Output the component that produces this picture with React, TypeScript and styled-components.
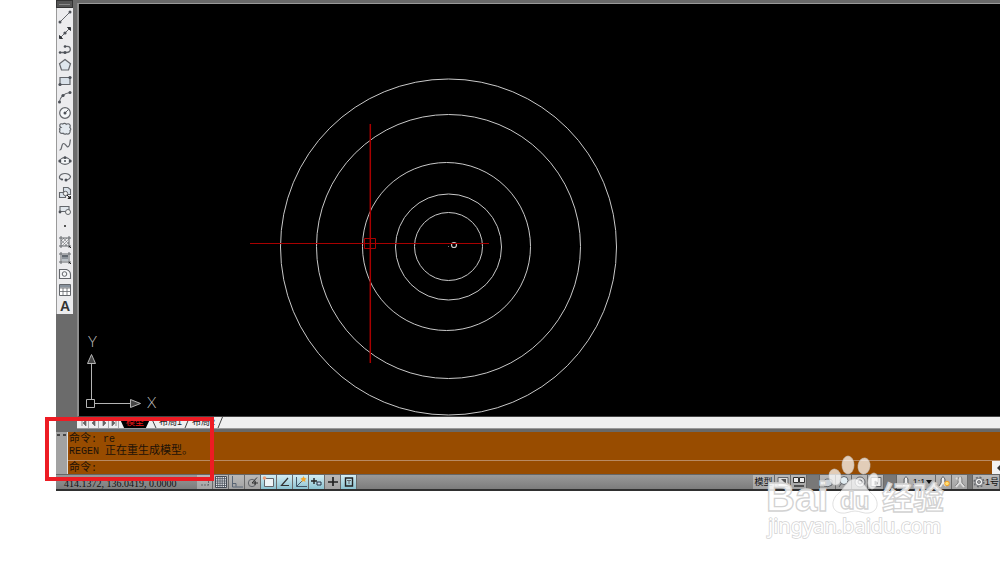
import React from "react";
import styled, { createGlobalStyle } from "styled-components";

const GlobalStyle = createGlobalStyle`
  *, *::before, *::after { box-sizing: border-box; }
  body {
    margin: 0;
    background: #fff;
    font-family: "Liberation Sans", "Noto Sans CJK SC", sans-serif;
    color: #111;
  }
  button, input {
    font: inherit;
    color: inherit;
    margin: 0;
    padding: 0;
    border: 0;
    border-radius: 0;
    background: none;
  }
  svg { display: block; }
`;

const Page = styled.div`
  position: relative;
  padding-left: 56px;
  min-height: 100vh;
  overflow: hidden;
`;

const Workspace = styled.div`
  display: flex;
`;

const ToolDock = styled.aside`
  flex: 0 0 21px;
  background: #6b6b6b;
`;

const Toolbar = styled.div`
  display: flex;
  flex-direction: column;
  gap: 1px;
  width: 17px;
  background: #ececee;
  border-left: 1px solid #9a9a9a;
`;

const Grip = styled.div`
  height: 8px;
  padding: 3px 2px 0;
  margin-left: -1px;
  background: #555;
  border: 1px solid #333;
  &::after {
    content: "";
    display: block;
    height: 1px;
    background: #888;
  }
`;

const ToolGroup = styled.div`
  display: flex;
  flex-direction: column;
`;

const ToolButton = styled.button`
  display: flex;
  align-items: center;
  justify-content: center;
  width: 15px;
  height: 16px;
`;

const Model = styled.main`
  flex: 1;
  min-width: 0;
  background: #696969;
  padding: 3px 0 3px;
`;

const Drawing = styled.div`
  height: 414px;
  background: #000;
  border-top: 1px solid #9a9a9a;
  border-left: 2px solid #8d8d8d;
  border-bottom: 1px solid #444;
  overflow: hidden;
`;

const TabStrip = styled.nav`
  display: flex;
  align-items: center;
  height: 12px;
  padding-left: 2px;
  background: #efefef;
  border-bottom: 1px solid #999;
  overflow: hidden;
`;

const PageButton = styled.button`
  display: flex;
  align-items: center;
  justify-content: center;
  width: 10px;
  height: 11px;
  border-right: 1px solid #aaa;
`;

const Tab = styled.button<{ $active?: boolean }>`
  height: 11px;
  width: ${(p) => (p.$active ? 32 : 27)}px;
  font-size: 9px;
  line-height: 11px;
  white-space: nowrap;
  color: ${(p) => (p.$active ? "#f01818" : "#222")};
  background: ${(p) => (p.$active ? "#000" : "none")};
  clip-path: ${(p) => (p.$active ? "polygon(0 0, 100% 0, 84% 100%, 16% 100%)" : "none")};
`;

const CommandPanel = styled.section`
  display: flex;
  background: #984c00;
`;

const CommandGrip = styled.div`
  flex: 0 0 12px;
  padding: 2px 1px 0;
  background: #a2a2a2;
  border-right: 1px solid #ddd;
  &::before {
    content: "";
    display: block;
    height: 2px;
    border-top: 1px dashed #444;
    border-bottom: 1px dashed #444;
  }
`;

const CommandBody = styled.div`
  flex: 1;
  min-width: 0;
  font-size: 11px;
  line-height: 12px;
  color: #1c1208;
`;

const History = styled.div`
  height: 29px;
  border-bottom: 1px solid #b98a62;
`;

const HistoryLine = styled.div`
  height: 12px;
  padding-left: 1px;
  white-space: pre;
`;

const Latin = styled.span`
  font-family: "Liberation Mono", monospace;
  font-size: 10px;
`;

const Prompt = styled.div`
  display: flex;
  align-items: center;
  height: 13px;
  padding-left: 1px;
`;

const PromptInput = styled.input`
  flex: 1;
  min-width: 0;
  height: 12px;
  margin-left: 4px;
  outline: none;
`;

const ScrollButton = styled.button`
  display: flex;
  align-items: center;
  justify-content: flex-end;
  width: 8px;
  height: 13px;
  background: #f2f2f2;
`;

const StatusBar = styled.footer`
  display: flex;
  height: 17px;
  background: linear-gradient(#999, #7c7c7c);
  border-top: 1px solid #666;
  border-bottom: 2px solid #2f2f2f;
  overflow: hidden;
`;

const Coordinates = styled.output`
  width: 141px;
  padding-left: 8px;
  font-family: "Liberation Serif", serif;
  font-size: 10px;
  line-height: 17px;
  white-space: nowrap;
  color: #111;
`;

const StatusSpacer = styled.div`
  flex: 1;
`;

const StatusGap = styled.div<{ $width: number }>`
  flex: 0 0 ${(p) => p.$width}px;
  background: #787878;
  border-right: 1px solid #666;
`;

const StatusButton = styled.button<{ $on?: boolean; $width?: number }>`
  display: flex;
  align-items: center;
  justify-content: center;
  flex: 0 0 ${(p) => p.$width ?? 16}px;
  height: 14px;
  font-size: 9px;
  line-height: 14px;
  white-space: nowrap;
  overflow: hidden;
  background: ${(p) => (p.$on ? "linear-gradient(#d3edf3, #8cc3d1)" : "linear-gradient(#b9b9b9, #a3a3a3)")};
  border-right: 1px solid #6a6a6a;
`;

const Highlight = styled.div`
  position: absolute;
  left: 45px;
  top: 417px;
  width: 169px;
  height: 64px;
  border: 4px solid #ed1c24;
  pointer-events: none;
`;

const Watermark = styled.div`
  position: absolute;
  right: 50px;
  top: 450px;
  pointer-events: none;
`;

const Icon = ({ children }: { children: React.ReactNode }) => (
  <svg width="14" height="14" viewBox="0 0 14 14" fill="none" stroke="#63666b" strokeWidth="1" aria-hidden="true">
    {children}
  </svg>
);

const dot = (x: number, y: number, r = 1.2) => <circle key={`${x}-${y}`} cx={x} cy={y} r={r} fill="#4c5057" stroke="none" />;

const drawTools: [string, React.ReactNode][] = [
  ["Line", <><path d="M2 12 12 2" />{dot(2, 12, 1.5)}{dot(12, 2, 1.5)}</>],
  ["Construction line", <><path d="M2 12 12 2" />{dot(7, 7, 1.6)}<path d="M9.500 1.500h3v3zM1.500 9.500v3h3z" fill="#33363b" stroke="#33363b" /></>],
  ["Polyline", <><path d="M2 10.500h6M7 4.500q5-1 5.300 2.500T8 10.500" strokeWidth="1.300" />{dot(2, 10.5)}{dot(7, 10.5, 1.5)}{dot(7, 4.5, 1.3)}</>],
  ["Polygon", <path d="M7 1.500 12.500 5.700 10.500 12h-7L1.500 5.700z" fill="#dfe7ee" strokeWidth="1.200" />],
  ["Rectangle", <><path d="M2 3.500h10v7H2z" fill="#d9e1e9" strokeWidth="1.200" />{dot(2, 10.5, 1.6)}{dot(12, 3.5, 1.6)}</>],
  ["Arc", <><path d="M1.500 12Q2.500 4 12 2.500" strokeWidth="1.200" />{dot(1.5, 12, 1.5)}{dot(5, 5.5, 1.6)}{dot(12, 2.5, 1.5)}</>],
  ["Circle", <><circle cx="7" cy="7" r="5.300" fill="#f6f8fa" strokeWidth="1.200" /><path d="m7 7 3-3" />{dot(7, 7, 1.5)}</>],
  ["Revision cloud", <path d="M3 5.500C.500 4 2 1 4.500 2 6 .800 8 1.300 8.300 2.300 11 .800 13.300 3 11.800 5.500c1.300 1 1.200 2.500.200 3 .800 2.500-1.500 4.300-3.500 3.200-1.500.800-2.800.300-3.500-.500-2.500.800-4.300-1.200-3-3.200C1 7.200 1.500 6 3 5.500z" fill="#e4eaf0" strokeWidth="1.200" />],
  ["Spline", <path d="M1.500 12C4.500 12.500 3 5.500 5.500 5.500S8.500 10 10.500 8.500 11.500 4.500 12.500 1.500" strokeWidth="1.200" />],
  ["Ellipse", <><ellipse cx="7" cy="7" rx="5" ry="3.300" fill="#f3f5f7" strokeWidth="1.200" />{dot(1.8, 7, 1.5)}{dot(12.2, 7, 1.5)}{dot(7, 3.7, 1.4)}{dot(7, 7, 1)}</>],
  ["Ellipse arc", <><path d="M4 9.500Q1 9 1.500 6.500 3 3.500 7 3.500t5.500 3Q12 9.500 8 10" strokeWidth="1.200" />{dot(8, 10, 1.5)}{dot(4, 9.5, 1.1)}</>],
  ["Insert block", <><path d="M5.500 1.500h4.500l2.500 2v5h-7zM1.500 6.500h6v5h-6z" fill="#d9e1e9" strokeWidth="1.100" /><circle cx="7.500" cy="7.500" r="2.200" fill="#eee" /><path d="m9 9 3 3M10 12.500h2.500V10z" stroke="#222" fill="#222" /></>],
];

const areaTools: [string, React.ReactNode][] = [
  ["Make block", <><path d="M2 3.500h9v5H2z" fill="#e0e6ec" strokeWidth="1.100" />{dot(2, 9, 1.4)}<circle cx="10" cy="9" r="2.500" fill="#f2f2f2" /></>],
  ["Point", <rect x="6" y="6" width="2" height="2" fill="#555" stroke="none" />],
  ["Hatch", <><path d="M1 3h12M1 11h12M3 1v12M11 1v12" /><path d="m3 6 3-3M3 9l6-6M4 11l7-7M7 11l4-4M3 5l6 6M5 3l6 6" strokeWidth=".5" /><path d="m11 11 2 2" stroke="#222" /></>],
  ["Gradient", <><path d="M1 3h12M1 11h12M3 1v12M11 1v12" /><path d="M4 4h6v2H4z" fill="#626970" stroke="none" /><path d="M4 6h6v2H4z" fill="#8d949b" stroke="none" /><path d="M4 8h6v2H4z" fill="#bac0c5" stroke="none" /><path d="m11 11 2 2" stroke="#222" /></>],
  ["Region", <><path d="M1.500 2.500h7q4 1.500 4 5v4h-11z" fill="#f4f6f8" strokeWidth="1.100" /><circle cx="6.500" cy="7" r="2.300" /></>],
  ["Table", <><path d="M1.500 1.500h11v11h-11z" fill="#fff" /><path d="M2 2h10v2.500H2z" fill="#87919c" stroke="none" /><path d="M1.500 5h11M1.500 8.500h11M5 5v7.500M9 5v7.500" strokeWidth=".8" /></>],
  ["Multiline text", <text x="7" y="12" textAnchor="middle" fontFamily="Liberation Sans, sans-serif" fontSize="14" fontWeight="700" fill="#333" stroke="none">A</text>],
];

const pagers: [string, string][] = [
  ["First tab", "M2 1v6M6 1 3 4l3 3z"],
  ["Previous tab", "M5 1 2 4l3 3z"],
  ["Next tab", "M3 1l3 3-3 3z"],
  ["Last tab", "M2 1l3 3-3 3zM6 1v6"],
];

const modes: [string, boolean, React.ReactNode][] = [
  ["Snap", false, <path d="M3 10h8M10.500 3v7" strokeDasharray="2 1" />],
  ["Grid", false, <><path d="M1.500 1.500h11v11h-11z" fill="#e6e8ec" stroke="#444b55" /><path d="M3.700 1v11M6 1v11M8.200 1v11M10.500 1v11M1 3.700h11M1 6h11M1 8.200h11M1 10.500h11" stroke="#444b55" strokeWidth=".8" /></>],
  ["Ortho", false, <path d="M2.500 1v11H13M2.500 8.500h3.500v3" stroke="#596574" />],
  ["Polar", false, <><circle cx="6" cy="8" r="3.700" /><path d="M6 8h6M6 8l5-5.500M9 6v4" stroke="#333" /></>],
  ["Object snap", true, <><path d="M2.500 3.500h9v8h-9z" fill="#eef4f6" /><circle cx="2.500" cy="3" r="1.800" fill="#ee9f7b" stroke="none" /></>],
  ["Object tracking", true, <path d="M10 3 3.500 10.500H11" stroke="#333" strokeWidth="1.200" />],
  ["Dynamic UCS", true, <><path d="M2.500 2v9.500H13M2.500 11.500 8 6" stroke="#44596b" /><path d="m9.500 1 1 2 2 .5-1.500 1.500.5 2-2-1-2 1 .5-2L6.500 3.500l2-.5z" fill="#f2a62c" stroke="none" /></>],
  ["Dynamic input", true, <><path d="M1 6h6M4 3v6" stroke="#222" strokeWidth="1.400" /><path d="M7 7h4v3H7z" fill="#cde" stroke="#234" /></>],
  ["Line weight", false, <path d="M2 7h10M7 2v9" stroke="#222" strokeWidth="1.700" />],
  ["Quick properties", true, <><path d="M3.500 3h7v8h-7z" stroke="#222" strokeWidth="1.400" /><path d="M5 5.500h4M7 5v4" /></>],
];

const ConcentricCircles = () => (
  <svg width="100%" height="412" fill="none" role="img" aria-label="Drawing">
    <g stroke="#c9c9c9">
      <circle cx="369.500" cy="243" r="168" />
      <circle cx="369.500" cy="242.500" r="132" />
      <circle cx="367.500" cy="242.500" r="84" />
      <circle cx="369.500" cy="243" r="53" />
      <circle cx="369.500" cy="242.500" r="34" />
      <circle cx="375" cy="241" r="2.500" strokeWidth="1.200" />
    </g>
    <rect x="369" y="242" width="1" height="1" fill="#777" />
    <g stroke="#a80000">
      <path d="M171 239.500h239" />
      <path d="M291.300 120v239" strokeWidth="1.500" />
      <path d="M285.500 234.500h11v10h-11z" />
    </g>
    <g stroke="#b4b4b4">
      <path d="M7.500 395.500h8v8h-8zM12.500 395.500V359.500M15.500 399.500H51.500" />
      <path d="M12.500 350.500l4 9h-8zM61.500 399.500l-10 4v-8z" fill="#444" />
    </g>
    <g fill="#c4c4c4" fontFamily="Lato, sans-serif" fontWeight="300" fontSize="15">
      <text x="9" y="343">Y</text>
      <text x="68" y="404">X</text>
    </g>
  </svg>
);

const TabSlash = ({ d }: { d: string }) => (
  <svg width="6" height="11" viewBox="0 0 6 11" stroke="#444" fill="none" aria-hidden="true"><path d={d} /></svg>
);

export default function App() {
  return (
    <Page>
      <GlobalStyle />
      <Workspace>
        <ToolDock>
          <Toolbar role="toolbar" aria-label="Draw">
            <Grip />
            {[drawTools, areaTools].map((group, i) => (
              <ToolGroup key={i}>
                {group.map(([name, art]) => (
                  <ToolButton key={name} type="button" aria-label={name}><Icon>{art}</Icon></ToolButton>
                ))}
              </ToolGroup>
            ))}
          </Toolbar>
        </ToolDock>
        <Model>
          <Drawing><ConcentricCircles /></Drawing>
          <TabStrip>
            {pagers.map(([name, d]) => (
              <PageButton key={name} type="button" aria-label={name}>
                <svg width="8" height="8" viewBox="0 0 8 8" fill="#666" stroke="#666" strokeWidth=".7"><path d={d} /></svg>
              </PageButton>
            ))}
            <Tab type="button" $active>模型</Tab>
            <TabSlash d="M0 0l5 11" />
            <Tab type="button">布局1</Tab>
            <TabSlash d="M5.500 0 1 11" />
            <Tab type="button">布局2</Tab>
            <TabSlash d="M5.500 0 1 11" />
          </TabStrip>
        </Model>
      </Workspace>

      <CommandPanel>
        <CommandGrip />
        <CommandBody>
          <History>
            <HistoryLine>命令<Latin>: re</Latin></HistoryLine>
            <HistoryLine><Latin>REGEN </Latin>正在重生成模型。</HistoryLine>
          </History>
          <Prompt>
            <label htmlFor="command">命令<Latin>:</Latin></label>
            <PromptInput id="command" type="text" />
            <ScrollButton type="button" aria-label="Scroll left">
              <svg width="4" height="6" viewBox="0 0 4 6" fill="#333"><path d="M4 0v6L1 3z" /></svg>
            </ScrollButton>
          </Prompt>
        </CommandBody>
      </CommandPanel>

      <StatusBar>
        <Coordinates>414.1372, 136.0419, 0.0000</Coordinates>
        {modes.map(([name, on, art]) => (
          <StatusButton key={name} type="button" $on={on} aria-label={name}><Icon>{art}</Icon></StatusButton>
        ))}
        <StatusSpacer />
        <StatusButton type="button" $width={22}>模型</StatusButton>
        <StatusButton type="button" aria-label="Layout"><Icon><path d="M2 2.500h10v9H2z" fill="#ddd" /><path d="m5 4 5 5V4z" fill="#555" stroke="none" /></Icon></StatusButton>
        <StatusButton type="button" aria-label="Quick view"><Icon><path d="M1.500 2.500h5v5h-5zM7.500 2.500h5v5h-5z" fill="#eee" stroke="#333" /><path d="M2 11h10" stroke="#333" strokeWidth="1.500" /></Icon></StatusButton>
        <StatusGap $width={13} />
        <StatusButton type="button" aria-label="Pan"><Icon><path d="M2 7q3-5 9-2v5q-4 3-8 1z" fill="#c8d0d8" /></Icon></StatusButton>
        <StatusButton type="button" aria-label="Zoom"><Icon><circle cx="7" cy="5.500" r="4" fill="#e2edf2" /><path d="m4 9-2 3" /></Icon></StatusButton>
        <StatusButton type="button" aria-label="Steering wheel"><Icon><circle cx="7" cy="7" r="5" fill="#ddd" /><circle cx="7" cy="7" r="2" /></Icon></StatusButton>
        <StatusButton type="button" aria-label="Show motion"><Icon><path d="M2 2.500h10v9H2z" fill="#eee" /><path d="m6 6 3 2-3 2z" fill="#555" /></Icon></StatusButton>
        <StatusGap $width={13} />
        <StatusButton type="button" $width={39}>
          <Icon><path d="M7 2v5l-3 4M7 7l3 4" stroke="#eee" strokeWidth="2" /><path d="M7 1.500 9 4v4l2 3M7 1.500 5 4v4l-2 3" /></Icon>
          1:1
          <svg width="8" height="6" viewBox="0 0 8 6"><path d="M1 1h6L4 5z" fill="#111" /></svg>
        </StatusButton>
        <StatusButton type="button" aria-label="Annotation visibility"><Icon><path d="M6 2v5l-3 5M6 7l3 4" stroke="#eee" strokeWidth="2" /><path d="M6 1.500 8 4v3M6 1.500 4 4v4l-2 3" /><circle cx="10" cy="8.500" r="2.300" fill="#ffe073" stroke="#f29b20" /></Icon></StatusButton>
        <StatusButton type="button" aria-label="Auto scale"><Icon><path d="M7 2v5l-4 5M7 7l4 5M3 3l4 3" stroke="#ddd" strokeWidth="2" /><path d="M8 1.500 9 4v4l3 3M6 2 5 4v4l-3 3" stroke="#888" /></Icon></StatusButton>
        <StatusGap $width={5} />
        <StatusButton type="button" $width={27}>
          <Icon><circle cx="7" cy="7" r="5.600" strokeWidth="1.800" strokeDasharray="2.200 2.200" /><circle cx="7" cy="7" r="4.500" fill="#f0f0f0" /><circle cx="7" cy="7" r="1.700" fill="#aaa" /></Icon>
          1号
        </StatusButton>
      </StatusBar>

      <Highlight />
      <Watermark>
        <svg width="190" height="95" viewBox="0 0 190 95" aria-label="Baidu">
          <g fill="#fff" fillOpacity=".72" stroke="#ccc" strokeOpacity=".6" strokeWidth="1">
            <ellipse cx="75" cy="27" rx="6" ry="8" transform="rotate(-12 75 27)" />
            <ellipse cx="88" cy="15" rx="6" ry="9" />
            <ellipse cx="104" cy="16" rx="6" ry="8" transform="rotate(8 104 16)" />
            <ellipse cx="113" cy="31" rx="5" ry="8" transform="rotate(12 113 31)" />
            <path d="M95 29c-8 0-10 9-16 14-8 6-9 18 2 20 5 1 9-2 14-2s9 3 14 2c11-2 10-14 2-20-6-5-8-14-16-14z" />
          </g>
          <g fill="#fff" fillOpacity=".85" stroke="#d2d2d2" strokeWidth="1.300" fontFamily="Liberation Sans, Noto Sans CJK SC, sans-serif" fontWeight="700">
            <text x="6" y="61" fontSize="40">Bai</text>
            <text x="80" y="59" fontSize="24">du</text>
            <text x="122" y="59" fontSize="31">经验</text>
          </g>
          <text x="8" y="83" fontSize="20" fontFamily="Noto Sans, sans-serif" fill="#fff" stroke="#d2d2d2" strokeWidth="1.500" paintOrder="stroke">jingyan.baidu.com</text>
        </svg>
      </Watermark>
    </Page>
  );
}
